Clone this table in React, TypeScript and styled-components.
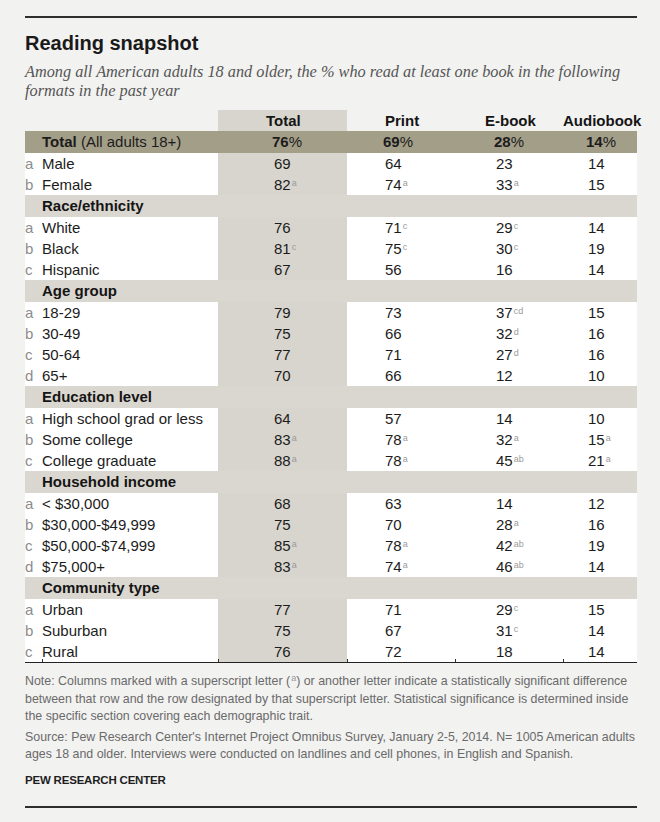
import styled, { createGlobalStyle } from "styled-components";

const GlobalStyle = createGlobalStyle`
  body {
    margin: 0;
    background: #f2f2f1;
    font-family: "Liberation Sans", Arial, sans-serif;
    color: #1c1c1c;
  }
`;

const GRID = "17px 176px 129px 108px 108px 74px";

const Page = styled.div`
  width: 612px;
  padding: 16px 0 14px 25px;
`;

const Rule = styled.div`
  border-top: 2px solid #2e2e2e;
`;

const Title = styled.h1`
  margin: 13px 0 0;
  font-size: 20px;
  line-height: 24px;
  font-weight: 700;
  color: #1a1a1a;
`;

const Subtitle = styled.p`
  margin: 7px 0 0;
  font-family: "Liberation Serif", "Times New Roman", serif;
  font-style: italic;
  font-size: 16.3px;
  line-height: 19px;
  color: #555;
  span {
    display: block;
    white-space: nowrap;
  }
`;

const Table = styled.div`
  margin-top: 10px;
  border-bottom: 1.5px solid #222;
`;

type RowKind = "head" | "total" | "band" | "data";

const rowBg: Record<RowKind, string> = {
  head: "transparent",
  total: "#a39e88",
  band: "#dad7d0",
  data: "#ffffff",
};

const Row = styled.div<{ $kind: RowKind }>`
  display: grid;
  grid-template-columns: ${GRID};
  height: ${(p) => (p.$kind === "band" || p.$kind === "total" ? 22 : 21)}px;
  line-height: ${(p) => (p.$kind === "band" || p.$kind === "total" ? 22 : 21)}px;
  background: ${(p) => rowBg[p.$kind]};
  font-size: 15px;
  white-space: nowrap;
`;

const Cell = styled.div<{ $pad?: number; $shade?: boolean; $tick?: boolean }>`
  position: relative;
  padding-left: ${(p) => p.$pad ?? 0}px;
  background: ${(p) => (p.$shade ? "#d8d5ce" : "transparent")};
  &::after {
    content: "";
    display: ${(p) => (p.$tick ? "block" : "none")};
    position: absolute;
    left: 0;
    bottom: 0;
    width: 1px;
    height: 3px;
    background: #333;
  }
`;

const Letter = styled(Cell)`
  color: #8c8c8c;
`;

const HeadCell = styled(Cell)`
  font-weight: 700;
  color: #151515;
`;

const BandLabel = styled.div`
  grid-column: 2 / -1;
  font-weight: 700;
  color: #151515;
`;

const Strong = styled.b`
  font-weight: 700;
`;

const Sup = styled.sup`
  font-size: 9px;
  line-height: 0;
  vertical-align: 4px;
  margin-left: 1px;
  color: #9a9a9a;
`;

const Notes = styled.div`
  margin-top: 10px;
  font-size: 12.4px;
  line-height: 17.5px;
  color: #6a6a6a;
`;

const Para = styled.p`
  margin: 0 0 3px;
  span {
    display: block;
    white-space: nowrap;
  }
`;

const Credit = styled.div`
  margin-top: 8px;
  font-size: 11.5px;
  line-height: 17.5px;
  font-weight: 700;
  letter-spacing: -0.2px;
  color: #1e1e1e;
`;

const BottomRule = styled.div`
  margin-top: 17px;
  border-top: 2px solid #2e2e2e;
`;

interface Column {
  name: string;
  headPad: number;
  valuePad: number;
  shade?: boolean;
}

const columns: Column[] = [
  { name: "Total", headPad: 48, valuePad: 56, shade: true },
  { name: "Print", headPad: 38, valuePad: 38 },
  { name: "E-book", headPad: 30, valuePad: 41 },
  { name: "Audiobook", headPad: 0, valuePad: 25 },
];

interface Item {
  label: string;
  values: string[];
}

interface Section {
  title?: string;
  items: Item[];
}

const sections: Section[] = [
  {
    items: [
      { label: "Male", values: ["69", "64", "23", "14"] },
      { label: "Female", values: ["82a", "74a", "33a", "15"] },
    ],
  },
  {
    title: "Race/ethnicity",
    items: [
      { label: "White", values: ["76", "71c", "29c", "14"] },
      { label: "Black", values: ["81c", "75c", "30c", "19"] },
      { label: "Hispanic", values: ["67", "56", "16", "14"] },
    ],
  },
  {
    title: "Age group",
    items: [
      { label: "18-29", values: ["79", "73", "37cd", "15"] },
      { label: "30-49", values: ["75", "66", "32d", "16"] },
      { label: "50-64", values: ["77", "71", "27d", "16"] },
      { label: "65+", values: ["70", "66", "12", "10"] },
    ],
  },
  {
    title: "Education level",
    items: [
      { label: "High school grad or less", values: ["64", "57", "14", "10"] },
      { label: "Some college", values: ["83a", "78a", "32a", "15a"] },
      { label: "College graduate", values: ["88a", "78a", "45ab", "21a"] },
    ],
  },
  {
    title: "Household income",
    items: [
      { label: "< $30,000", values: ["68", "63", "14", "12"] },
      { label: "$30,000-$49,999", values: ["75", "70", "28a", "16"] },
      { label: "$50,000-$74,999", values: ["85a", "78a", "42ab", "19"] },
      { label: "$75,000+", values: ["83a", "74a", "46ab", "14"] },
    ],
  },
  {
    title: "Community type",
    items: [
      { label: "Urban", values: ["77", "71", "29c", "15"] },
      { label: "Suburban", values: ["75", "67", "31c", "14"] },
      { label: "Rural", values: ["76", "72", "18", "14"] },
    ],
  },
];

const totals = ["76", "69", "28", "14"];
const letters = "abcd";

function Value({ raw }: { raw: string }) {
  const m = raw.match(/^(\d+)([a-z]*)$/);
  const num = m ? m[1] : raw;
  const sup = m ? m[2] : "";
  return (
    <>
      {num}
      {sup && <Sup>{sup}</Sup>}
    </>
  );
}

export default function App() {
  const lastSection = sections.length - 1;
  return (
    <>
      <GlobalStyle />
      <Page>
        <Rule />
        <Title>Reading snapshot</Title>
        <Subtitle>
          <span>
            Among all American adults 18 and older, the % who read at least one book in the following
          </span>
          <span>formats in the past year</span>
        </Subtitle>

        <Table>
          <Row $kind="head">
            <Cell />
            <Cell />
            {columns.map((c) => (
              <HeadCell key={c.name} $pad={c.headPad} $shade={c.shade}>
                {c.name}
              </HeadCell>
            ))}
          </Row>

          <Row $kind="total">
            <Cell />
            <Cell>
              <Strong>Total</Strong> (All adults 18+)
            </Cell>
            {columns.map((c, i) => (
              <Cell key={c.name} $pad={c.valuePad - 2}>
                <Strong>{totals[i]}</Strong>%
              </Cell>
            ))}
          </Row>

          {sections.map((s, si) => (
            <div key={si}>
              {s.title && (
                <Row $kind="band">
                  <BandLabel>{s.title}</BandLabel>
                </Row>
              )}
              {s.items.map((item, ii) => {
                const last = si === lastSection && ii === s.items.length - 1;
                return (
                  <Row $kind="data" key={item.label}>
                    <Letter>{letters[ii]}</Letter>
                    <Cell $tick={last}>{item.label}</Cell>
                    {columns.map((c, ci) => (
                      <Cell key={c.name} $pad={c.valuePad} $shade={c.shade} $tick={last}>
                        <Value raw={item.values[ci]} />
                      </Cell>
                    ))}
                  </Row>
                );
              })}
            </div>
          ))}
        </Table>

        <Notes>
          <Para>
            <span>
              Note: Columns marked with a superscript letter (<Sup>a</Sup>) or another letter indicate a
              statistically significant difference
            </span>
            <span>
              between that row and the row designated by that superscript letter. Statistical significance
              is determined inside
            </span>
            <span>the specific section covering each demographic trait.</span>
          </Para>
          <Para>
            <span>
              Source: Pew Research Center's Internet Project Omnibus Survey, January 2-5, 2014. N= 1005
              American adults
            </span>
            <span>
              ages 18 and older. Interviews were conducted on landlines and cell phones, in English and
              Spanish.
            </span>
          </Para>
        </Notes>
        <Credit>PEW RESEARCH CENTER</Credit>
        <BottomRule />
      </Page>
    </>
  );
}
